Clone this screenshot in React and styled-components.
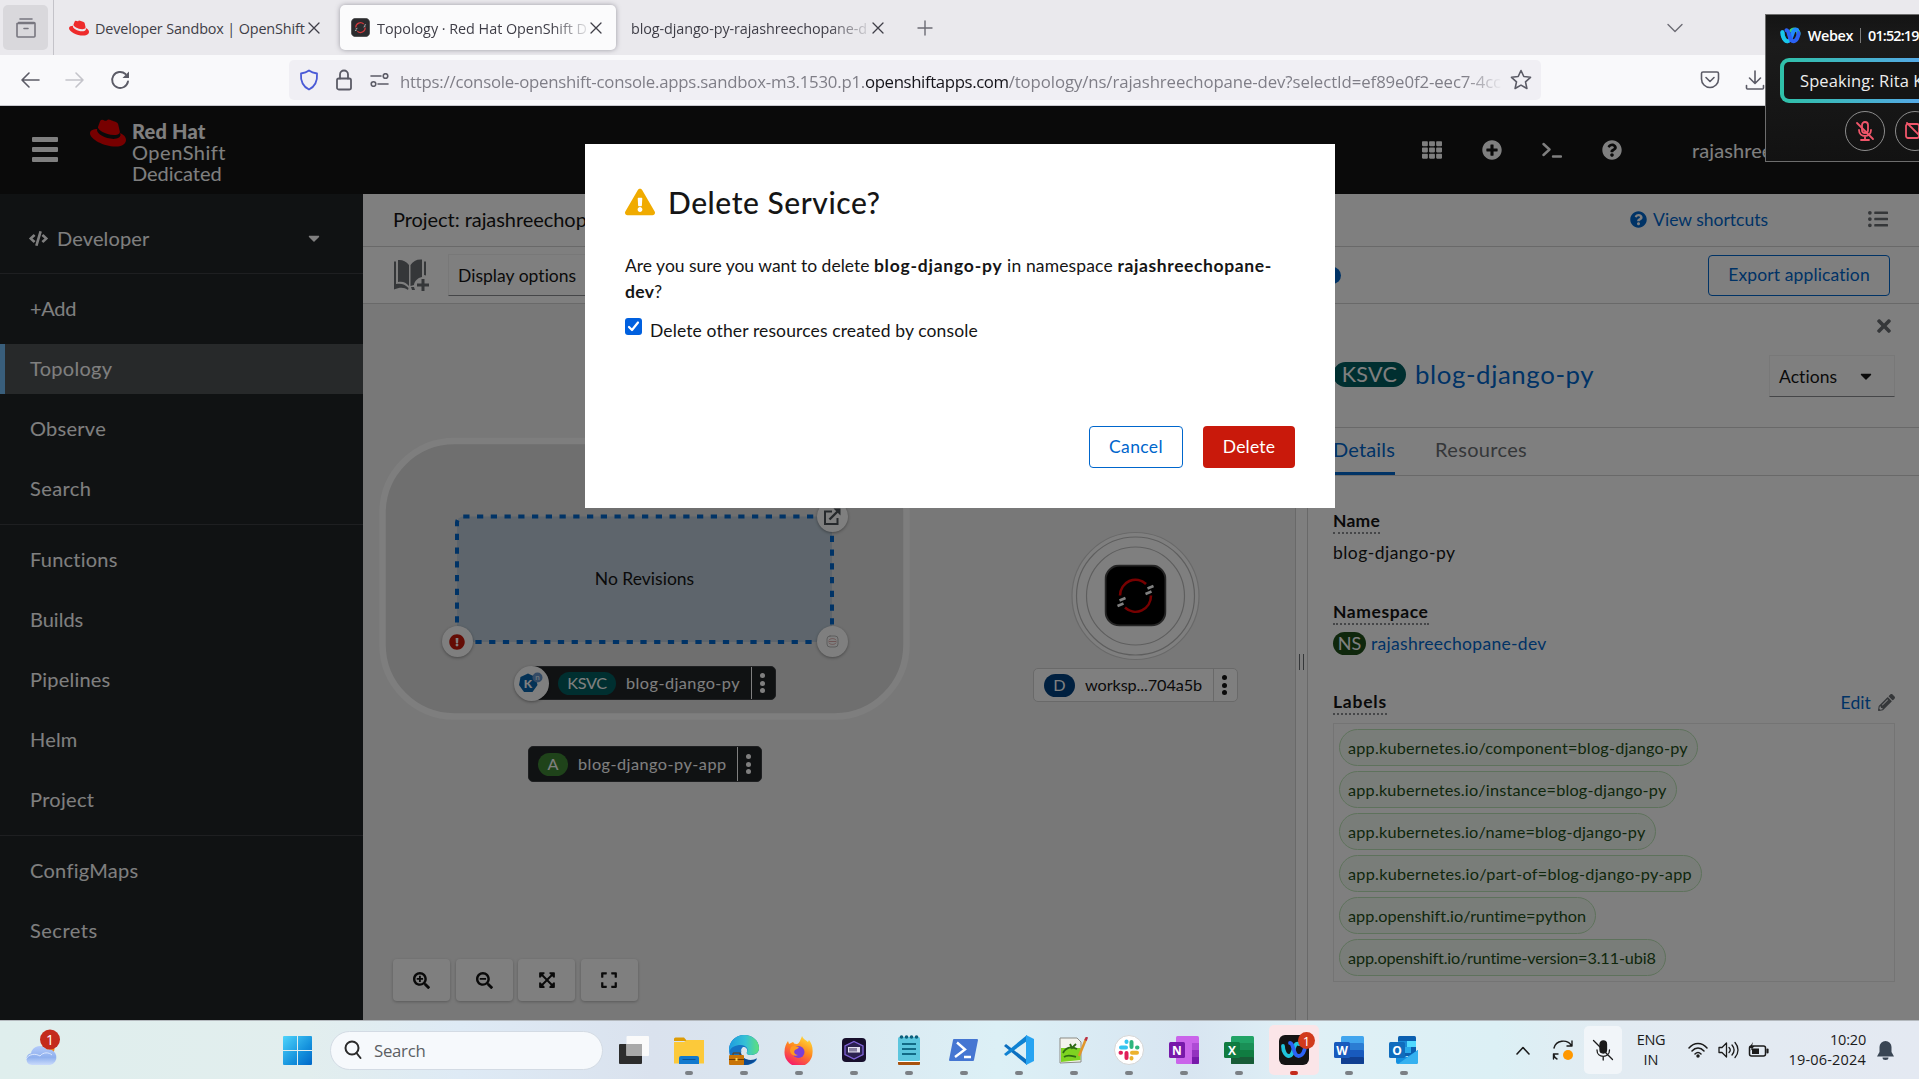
import React from "react";
import styled, { createGlobalStyle } from "styled-components";
import {
  FaTh, FaPlusCircle, FaQuestionCircle, FaCode, FaCaretDown, FaListUl, FaTimes,
  FaPencilAlt, FaExclamationTriangle, FaExclamationCircle, FaSearchPlus,
  FaSearchMinus, FaExpandArrowsAlt, FaExpand,
} from "react-icons/fa";
import { SiRedhat } from "react-icons/si";

const consoleFont = `Lato, "Open Sans", sans-serif`;
const systemFont = `"Open Sans", "Noto Sans", sans-serif`;

const GlobalStyle = createGlobalStyle`
  *, *::before, *::after { box-sizing: border-box; }
  body { margin: 0; overflow: hidden; }
  button { font: inherit; }
  svg { display: block; flex: none; }
`;

const Desktop = styled.div`
  position: relative;
  display: flex;
  flex-direction: column;
  width: 1919px;
  height: 1079px;
  overflow: hidden;
  font-family: ${systemFont};
`;

const Text = styled.span`
  white-space: pre;
  letter-spacing: ${(p) => p.$ls || 0}px;
  font-size: ${(p) => (p.$size ? `${p.$size}px` : "inherit")};
  font-weight: ${(p) => p.$weight || "inherit"};
  color: ${(p) => p.$color || "inherit"};
`;

/* ---------- Browser chrome ---------- */

const TabStrip = styled.div`
  display: flex;
  align-items: center;
  height: 55px;
  flex: none;
  background: #eae9ed;
  color: #5b5a66;
`;

const RecentBox = styled.div`
  display: flex;
  align-items: center;
  justify-content: center;
  width: 45px;
  height: 45px;
  margin-left: 3px;
  border-radius: 5px;
  background: #d9d8dc;
  color: #77767f;
`;

const StripDivider = styled.div`
  width: 1px;
  height: 55px;
  margin-left: 5px;
  background: #c4c3c9;
`;

const Tab = styled.div`
  display: flex;
  align-items: center;
  width: ${(p) => p.$width}px;
  height: 45px;
  margin-left: ${(p) => p.$gap || 0}px;
  padding: 0 ${(p) => p.$right || 12}px 0 ${(p) => p.$pad}px;
  border-radius: 5px;
  background: ${(p) => (p.$active ? "#fbfbfc" : "transparent")};
  box-shadow: ${(p) => (p.$active ? "0 0 5px rgba(90, 88, 100, 0.55)" : "none")};
  color: #3f3e47;
`;

const TabTitle = styled.div`
  flex: 1;
  margin: 2px 0 0 ${(p) => p.$gap || 0}px;
  overflow: hidden;
  font-size: 14.4px;
  mask-image: ${(p) => (p.$fade ? "linear-gradient(90deg, #000 82%, transparent 101%)" : "none")};
`;

const NewTab = styled.div`
  margin-left: 21px;
  color: #6c6b74;
`;

const TabsMenu = styled.div`
  margin-left: 734px;
  color: #6c6b74;
`;

const NavBar = styled.div`
  display: flex;
  align-items: center;
  height: 51px;
  flex: none;
  padding-left: 20px;
  border-bottom: 1px solid #c9c9cf;
  background: #f9f9fb;
  color: #5b5b66;
`;

const NavIcon = styled.div`
  margin-left: ${(p) => p.$gap || 0}px;
  color: ${(p) => p.$color || "inherit"};
`;

const AddressBar = styled.div`
  display: flex;
  align-items: center;
  width: 1252px;
  height: 40px;
  margin-left: 159px;
  padding-left: 10px;
  border-radius: 5px;
  background: #f0eff4;
`;

const Url = styled.div`
  width: 1103px;
  margin: 2px 0 0 11px;
  overflow: hidden;
  white-space: nowrap;
  font-size: 16.8px;
  color: #7f7e87;
  mask-image: linear-gradient(90deg, #000 96.5%, transparent 100%);
`;

/* ---------- Webex floating bar ---------- */

const WebexBar = styled.div`
  position: absolute;
  left: 1765px;
  top: 14px;
  width: 420px;
  height: 148px;
  padding: 10px 0 0 14px;
  border: 1px solid #6d6d6d;
  background: linear-gradient(#141414, #1b1b1b 20%, #121212);
  color: #fff;
`;

const WebexTitle = styled.div`
  display: flex;
  align-items: center;
  height: 21px;
  font-size: 14.4px;
  font-weight: 600;
`;

const WebexSeparator = styled.i`
  width: 1px;
  height: 15px;
  margin: 0 7px;
  background: #7b7b7b;
`;

const Speaking = styled.div`
  display: flex;
  align-items: center;
  width: 400px;
  height: 45px;
  margin-top: 12px;
  padding-left: 16px;
  border: 4px solid transparent;
  border-radius: 9px;
  background:
    linear-gradient(#151515, #151515) padding-box,
    linear-gradient(90deg, #2fc0a8, #55a9e6 35%, #4a7de0) border-box;
  color: #ededed;
`;

const WebexControls = styled.div`
  display: flex;
  gap: 10px;
  margin: 8px 0 0 65px;
`;

const RoundControl = styled.div`
  display: flex;
  align-items: center;
  justify-content: center;
  width: 40px;
  height: 40px;
  border: 1px solid #8c8c8c;
  border-radius: 50%;
  color: #f0566a;
`;

/* ---------- OpenShift console ---------- */

const Console = styled.div`
  position: relative;
  display: flex;
  flex-direction: column;
  height: 914px;
  flex: none;
  font-family: ${consoleFont};
  font-size: 17.5px;
  color: #151515;
`;

const Masthead = styled.header`
  display: flex;
  align-items: center;
  height: 88px;
  flex: none;
  padding: 0 0 1px 32px;
  background: #151515;
  color: #fff;
`;

const Burger = styled.div`
  display: flex;
  flex-direction: column;
  gap: 5px;
  width: 26px;

  i {
    height: 5px;
    border-radius: 1px;
    background: #fff;
  }
`;

const Brand = styled.div`
  display: flex;
  width: 1364px;
  height: 87px;
  padding: 9px 0 0 32px;
`;

const BrandWords = styled.div`
  display: flex;
  flex-direction: column;
  margin: 6px 0 0 6px;
  font-size: 20px;
  line-height: 21px;
`;

const MastheadTools = styled.div`
  display: flex;
  align-items: center;
  gap: 40px;
  width: 270px;
`;

const ConsoleBody = styled.div`
  display: flex;
  flex: 1;
  min-height: 0;
`;

const Sidebar = styled.nav`
  width: 363px;
  flex: none;
  background: #212427;
  color: #fff;
  font-size: 20px;
`;

const Perspective = styled.div`
  display: flex;
  align-items: center;
  height: 80px;
  padding: 9px 40px 0 29px;
  border-bottom: 1px solid #3c3f42;
`;

const PerspectiveName = styled.div`
  flex: 1;
  margin-left: 9px;
`;

const NavSection = styled.div`
  display: flex;
  flex-direction: column;
  gap: 10px;
  padding: 10px 0;
  border-bottom: ${(p) => (p.$last ? 0 : 1)}px solid #3c3f42;
`;

const NavItem = styled.div`
  display: flex;
  align-items: center;
  height: 50px;
  padding: 0 0 2px ${(p) => (p.$active ? 25 : 30)}px;
  border-left: ${(p) => (p.$active ? 5 : 0)}px solid #73bcf7;
  background: ${(p) => (p.$active ? "#4f5255" : "transparent")};
`;

const Main = styled.main`
  display: flex;
  flex-direction: column;
  flex: 1;
  min-width: 0;
  background: #fff;
`;

const ProjectBar = styled.div`
  display: flex;
  align-items: center;
  justify-content: space-between;
  height: 53px;
  flex: none;
  padding: 0 31px 2px 30px;
  border-bottom: 1px solid #d2d2d2;
`;

const ProjectTools = styled.div`
  display: flex;
  align-items: center;
  gap: 100px;
`;

const ShortcutLink = styled.a`
  display: flex;
  align-items: center;
  gap: 6px;
  color: #06c;
`;

const Toolbar = styled.div`
  display: flex;
  align-items: center;
  height: 57px;
  flex: none;
  padding: 0 29px 0 30px;
  border-bottom: 1px solid #d2d2d2;
`;

const SelectBox = styled.div`
  display: flex;
  align-items: center;
  justify-content: space-between;
  width: ${(p) => p.$width}px;
  height: 42px;
  margin-left: ${(p) => p.$gap || 0}px;
  padding: 0 ${(p) => p.$right || 10}px 0 9px;
  border: 1px solid #f0f0f0;
  border-bottom-color: #8a8d90;
`;

const InfoDot = styled.div`
  width: 19px;
  height: 17px;
  margin-left: auto;
  border-radius: 9px;
  background: #06c;
`;

const OutlineButton = styled.button`
  height: ${(p) => p.$height || 42}px;
  width: ${(p) => p.$width}px;
  margin-left: ${(p) => p.$gap || 0}px;
  padding: 0 0 2px;
  border: 1px solid #06c;
  border-radius: 4px;
  background: transparent;
  color: #06c;
`;

const Split = styled.div`
  display: flex;
  flex: 1;
  min-height: 0;
`;

const Canvas = styled.section`
  position: relative;
  width: 932px;
  flex: none;
  background: #f0f0f0;
`;

const Shapes = styled.svg`
  position: absolute;
  inset: 0;
`;

const RevisionCaption = styled.div`
  position: absolute;
  left: 94px;
  top: 264px;
  width: 375px;
  text-align: center;
`;

const Decorator = styled.div`
  position: absolute;
  left: ${(p) => p.$x - p.$r}px;
  top: ${(p) => p.$y - p.$r}px;
  display: flex;
  align-items: center;
  justify-content: center;
  width: ${(p) => p.$r * 2}px;
  height: ${(p) => p.$r * 2}px;
  border-radius: 50%;
  background: #fff;
  box-shadow: 0 1px 3px rgba(3, 3, 3, 0.35);
  color: ${(p) => p.$color || "#4d5258"};
`;

const NodeLabel = styled.div`
  position: absolute;
  left: ${(p) => p.$x}px;
  top: ${(p) => p.$y}px;
  display: flex;
  align-items: center;
  width: ${(p) => p.$width}px;
  height: ${(p) => p.$height}px;
  padding-left: ${(p) => p.$pad}px;
  border: 1px solid ${(p) => (p.$dark ? "#3c3f42" : "#d2d2d2")};
  border-radius: 5px;
  background: ${(p) => (p.$dark ? "#212427" : "#fff")};
  color: ${(p) => (p.$dark ? "#fff" : "#151515")};
  font-size: 16.25px;
`;

const LabelName = styled.div`
  flex: 1;
  margin-left: 10px;
  padding-bottom: 2px;
`;

const Kebab = styled.div`
  display: flex;
  flex-direction: column;
  align-items: center;
  justify-content: center;
  gap: 2.4px;
  width: 24px;
  height: 100%;
  padding-right: 2px;
  border-left: 1px solid ${(p) => (p.$dark ? "#fff" : "#d2d2d2")};

  i {
    width: 5px;
    height: 5px;
    border-radius: 50%;
    background: ${(p) => (p.$dark ? "#fff" : "#151515")};
  }
`;

const Badge = styled.span`
  display: inline-flex;
  align-items: center;
  justify-content: center;
  width: ${(p) => p.$width}px;
  height: ${(p) => p.$height || 23}px;
  flex: none;
  padding-bottom: 1px;
  border-radius: 25px;
  background: ${(p) => p.$bg};
  color: #fff;
  font-size: ${(p) => p.$size || 16.25}px;
`;

const ZoomBar = styled.div`
  position: absolute;
  left: 30px;
  top: 655px;
  display: flex;
  gap: 5.5px;
`;

const ZoomButton = styled.button`
  display: flex;
  align-items: center;
  justify-content: center;
  width: 57px;
  height: 42px;
  padding: 0;
  border: 0;
  border-radius: 4px;
  background: #fff;
  box-shadow: 0 1px 3px rgba(3, 3, 3, 0.25);
  color: #151515;
`;

const Splitter = styled.div`
  display: flex;
  align-items: center;
  justify-content: center;
  gap: 3px;
  width: 13px;
  flex: none;
  border: solid #d2d2d2;
  border-width: 0 1px;

  i {
    width: 1px;
    height: 16px;
    background: #6a6e73;
  }
`;

const SidePanel = styled.aside`
  flex: 1;
  min-width: 0;
`;

const PanelClose = styled.div`
  display: flex;
  justify-content: flex-end;
  padding: 12px 25px 0 0;
  height: 44px;
  color: #6a6e73;
`;

const PanelHeader = styled.div`
  display: flex;
  align-items: center;
  height: 80px;
  padding: 0 24px 23px 25px;
  border-bottom: 1px solid #d2d2d2;
`;

const HeaderBadge = styled.div`
  padding-bottom: 3px;
`;

const PanelTitle = styled.div`
  flex: 1;
  margin-left: 9px;
  padding-bottom: 4px;
  font-size: 25.8px;
  color: #06c;
`;

const Tabs = styled.div`
  display: flex;
  gap: 40px;
  height: 48px;
  padding-left: 25px;
  border-bottom: 1px solid #d2d2d2;
  font-size: 20px;
`;

const PanelTab = styled.div`
  height: 47px;
  padding-top: 9px;
  border-bottom: ${(p) => (p.$active ? "3px solid #06c" : "0")};
  color: ${(p) => (p.$active ? "#06c" : "#6a6e73")};
`;

const Details = styled.div`
  display: flex;
  flex-direction: column;
  align-items: flex-start;
  padding: 34px 24px 0 25px;
`;

const Term = styled.div`
  height: 24px;
  line-height: 22px;
  margin-top: ${(p) => p.$gap || 0}px;
  border-bottom: 2px dotted #8a8d90;
  font-weight: 700;
`;

const Value = styled.div`
  display: flex;
  align-items: center;
  gap: 5px;
  height: 24px;
  margin-top: ${(p) => p.$gap || 6}px;
  color: ${(p) => p.$color || "inherit"};
`;

const LabelsHead = styled.div`
  display: flex;
  align-self: stretch;
  justify-content: space-between;
  margin-top: 36px;
`;

const EditLink = styled.a`
  display: flex;
  align-items: center;
  gap: 7px;
  height: 22px;
  color: #06c;
`;

const LabelList = styled.div`
  display: flex;
  flex-direction: column;
  align-items: flex-start;
  align-self: stretch;
  gap: 5px;
  height: 259px;
  margin-top: 8px;
  padding: 5px;
  border: 1px solid #e8e8e8;
`;

const Chip = styled.span`
  display: flex;
  align-items: center;
  height: 37px;
  padding: 0 9px 0 8px;
  border: 1px solid #bde5b8;
  border-radius: 19px;
  background: #f3faf2;
  color: #1e4f18;
  font-size: 16.25px;
`;

const Backdrop = styled.div`
  position: absolute;
  inset: 0;
  display: flex;
  justify-content: center;
  align-items: flex-start;
  padding: 38px 0 0 1px;
  background: rgba(0, 0, 0, 0.5);
`;

const Modal = styled.div`
  display: flex;
  flex-direction: column;
  width: 750px;
  height: 364px;
  padding: 38px 40px 40px;
  background: #fff;
  color: #151515;
`;

const ModalTitle = styled.h1`
  display: flex;
  align-items: center;
  gap: 13px;
  height: 40px;
  margin: 0;
  font-size: 30px;
  font-weight: 500;
`;

const ModalText = styled.p`
  margin: 31px 0 0;
  line-height: 26px;
`;

const CheckRow = styled.label`
  display: flex;
  gap: 8px;
  margin-top: 13px;
  line-height: 26px;
`;

const CheckMark = styled.span`
  display: flex;
  align-items: center;
  justify-content: center;
  width: 17px;
  height: 17px;
  border-radius: 3px;
  background: #0060df;
`;

const ModalActions = styled.div`
  display: flex;
  justify-content: flex-end;
  gap: 20px;
  margin-top: auto;
`;

const DangerButton = styled.button`
  width: 92px;
  height: 42px;
  padding: 0 0 2px;
  border: 0;
  border-radius: 4px;
  background: #c9190b;
  color: #fff;
`;

/* ---------- Taskbar ---------- */

const Taskbar = styled.div`
  display: flex;
  align-items: center;
  height: 59px;
  flex: none;
  padding-right: 15px;
  border-top: 1px solid #b4b9be;
  background: linear-gradient(90deg, #dfeeed 0, #e2eeee 16%, #deeaf5 24%, #dae2ee 34%, #dae7f0 42%, #dcf0f6 52%, #d8e5f1 62%, #dff0f6 68%, #dcf0f5 78%, #e2ebf2 84%, #e4e9f2 100%);
`;

const Weather = styled.div`
  width: 270px;
  padding-left: 24px;
`;

const Cell = styled.div`
  position: relative;
  display: flex;
  align-items: center;
  justify-content: center;
  width: ${(p) => p.$width || 55}px;
  height: 58px;
  margin-left: ${(p) => p.$gap || 0}px;

  &::after {
    content: "";
    position: absolute;
    bottom: 4px;
    width: 8px;
    height: 4px;
    border-radius: 2px;
    background: ${(p) => (p.$dot ? p.$dot : "transparent")};
  }
`;

const AlertTile = styled.div`
  display: flex;
  align-items: center;
  width: 50px;
  height: 50px;
  padding-left: 10px;
  border-radius: 5px;
  background: #fbe5e8;
`;

const SearchPill = styled.div`
  display: flex;
  align-items: center;
  gap: 12px;
  width: 273px;
  height: 39px;
  margin: 0 3px 0 5px;
  padding-left: 12px;
  border: 1px solid #d3dbe4;
  border-radius: 20px;
  background: #f6f9fc;
  color: #5c5f63;
  font-size: 16.8px;
`;

const MicTile = styled.div`
  display: flex;
  align-items: center;
  justify-content: center;
  width: 38px;
  height: 48px;
  margin-left: 1px;
  border-radius: 5px;
  background: #f1f5f9;
`;

const Tray = styled.div`
  display: flex;
  align-items: center;
  margin-left: auto;
  color: #1b1b1b;
`;

const Lines = styled.div`
  display: flex;
  flex-direction: column;
  align-items: ${(p) => (p.$right ? "flex-end" : "center")};
  width: ${(p) => p.$width}px;
  margin-right: ${(p) => p.$gap || 0}px;
  font-size: 14.5px;
  line-height: 20px;
`;

/* ---------- Icons ---------- */

const Stroke = ({ w = 20, h = w, box = "0 0 20 20", sw = 1.6, children, ...rest }) => (
  <svg width={w} height={h} viewBox={box} fill="none" stroke="currentColor" strokeWidth={sw} strokeLinecap="round" strokeLinejoin="round" {...rest}>
    {children}
  </svg>
);

const CloseIcon = () => <Stroke w={12} box="0 0 12 12" sw={1.3}><path d="M1 1l10 10M11 1L1 11" /></Stroke>;

const OpenShiftIcon = ({ size, tile = "#000", strong }) => (
  <svg width={size} height={size} viewBox="0 0 62 62">
    <rect x="1" y="1" width="60" height="60" rx="14" fill={tile} stroke="#4a4a4a" strokeWidth="2" />
    <g fill="none" strokeWidth={strong ? 4 : 2.6}>
      <path d="M15.500 31a15.500 16 0 0 1 26-11.500M46.500 31a15.500 16 0 0 1-26 12" stroke={strong ? "#d0393c" : "#e00"} />
      <path d="M43 24l6-2.500M41 29.500l6-2.500M15 36l6-2.500M13 41.500l6-2.500" stroke={strong ? "#b5b5b5" : "#fff"} strokeWidth={strong ? 3 : 2.6} />
    </g>
  </svg>
);

const WebexMark = ({ w = 21, h = 17 }) => (
  <svg width={w} height={h} viewBox="0 0 26 20" fill="none" strokeWidth="5" strokeLinecap="round">
    <path d="M14 4c3-3 9-1 9 4" stroke="#3bd16f" />
    <path d="M3 6c0 6 3 11 6.500 11S15 9 16 6s3-4 5-3" stroke="#1f8bff" />
    <path d="M3 6c0 6 3 11 6 11" stroke="#18c8e8" />
    <path d="M8 3.500C12 4 11 17 16.500 17 20 17 23 12 23 7" stroke="#2b62f5" />
  </svg>
);

const QuickStartIcon = () => (
  <svg width="36" height="33" viewBox="0 0 36 33" fill="#6a6e73">
    <path d="M5 1c4-.5 8 1 11 5v21c-3-4-7-5-11-4zM17.500 6C20 2 24 0 29 .5V18c-4.500 1-7.500 4-8 8l-3.500 1z" />
    <path d="M1 2.500h2V25c5-1 9 0 12.500 4l-.5 2c-4-3-8-3-14-.5zM31 2.500h2v14l-2-.5zM18 28h3l1 3h-3z" />
    <path d="M28.500 20h3v4.500H36v3h-4.500V32h-3v-4.500H24v-3h4.500z" />
  </svg>
);

const OpenUrlIcon = () => (
  <svg width="18" height="18" viewBox="0 0 18 18" fill="none" stroke="currentColor">
    <path d="M9 3.500H2V16h12.500V10" strokeWidth="2" />
    <path d="M6.500 11.500L14.500 3.500" strokeWidth="2.400" />
    <path d="M10.500.5H17.500V7.500z" fill="currentColor" stroke="none" />
  </svg>
);

const KnativeIcon = () => (
  <svg width="26" height="22" viewBox="0 0 26 22">
    <path d="M10 1.500l7.500 3.500 2 8-5 7H6L1 13l1.500-8z" fill="#0865ad" />
    <circle cx="19.500" cy="5.500" r="5" fill="#6695ca" />
    <text x="10" y="15.500" textAnchor="middle" fontFamily={consoleFont} fontWeight="900" fontSize="12" fill="#fff">K</text>
    <text x="19.500" y="8" textAnchor="middle" fontFamily={consoleFont} fontWeight="700" fontSize="8" fill="#d5e4f4">n</text>
  </svg>
);

const BuildIcon = () => (
  <Stroke w={13} h={13} box="0 0 13 13" sw={1} color="#b9b9b9">
    <rect x="1" y="1" width="11" height="11" rx="3" />
    <path d="M3 5c2-2 5-2 7 0M3 8c2 2 5 2 7 0M3 6.500h7" stroke="#dba8a8" />
  </Stroke>
);

const OfficeIcon = ({ letter, tile, shades }) => (
  <svg width="30" height="28" viewBox="0 0 30 28">
    {shades.map((c, i) => <rect key={c} x="7" y={i * 7} width="23" height={28 - i * 7} rx="1.500" fill={c} />)}
    <rect x="0" y="6" width="16" height="16" rx="1.500" fill={tile} />
    <text x="8" y="18.500" textAnchor="middle" fontFamily={systemFont} fontWeight="700" fontSize="12" fill="#fff">{letter}</text>
  </svg>
);

const OneNoteIcon = () => (
  <svg width="30" height="28" viewBox="0 0 30 28">
    <rect x="7" width="23" height="28" rx="1.500" fill="#ca64ea" />
    <path d="M23 7h7v7h-7z" fill="#ae4bd5" /><path d="M23 14h7v7h-7z" fill="#9332bf" /><path d="M23 21h7v6a1 1 0 0 1-1 1h-6z" fill="#7719aa" />
    <rect x="0" y="6" width="16" height="16" rx="1.500" fill="#7719aa" />
    <text x="8" y="18.500" textAnchor="middle" fontFamily={systemFont} fontWeight="700" fontSize="12" fill="#fff">N</text>
  </svg>
);

const OutlookIcon = () => (
  <svg width="30" height="28" viewBox="0 0 30 28">
    <rect x="9" width="18" height="20" rx="1.500" fill="#0a5fb0" />
    <path d="M9 5h9v6H9z" fill="#1a8ad8" /><path d="M18 5h9v6h-9z" fill="#50d9ff" /><path d="M14 11h8v6h-8z" fill="#28a8ea" />
    <path d="M7 14l11 7 11-7v12a2 2 0 0 1-2 2H9a2 2 0 0 1-2-2z" fill="#1590df" />
    <path d="M29 14v12a2 2 0 0 1-2 2H9z" fill="#35b1f0" />
    <rect x="0" y="6" width="16" height="16" rx="1.500" fill="#0f6cbd" />
    <text x="8" y="18.500" textAnchor="middle" fontFamily={systemFont} fontWeight="700" fontSize="12" fill="#fff">O</text>
  </svg>
);

const WeatherIcon = () => (
  <svg width="36" height="42" viewBox="0 0 36 42">
    <defs><linearGradient id="cloud" x2="0" y2="1"><stop offset="0" stopColor="#b4cbfa" /><stop offset=".6" stopColor="#8fb0ee" /><stop offset="1" stopColor="#c9dafb" /></linearGradient></defs>
    <circle cx="24" cy="20" r="6.500" fill="#f08a1c" />
    <path d="M8 36a6 6 0 0 1-1-11.800A9 9 0 0 1 23 20.500a7.500 7.500 0 0 1 3 15.500z" fill="url(#cloud)" />
    <path d="M2 30c3-5 9-6 14-3 3-4 9-4 12-1" stroke="#dbe7fd" strokeWidth="1" fill="none" />
    <circle cx="26" cy="10.500" r="10" fill="#c42b1c" />
    <text x="26" y="15.500" textAnchor="middle" fontFamily={systemFont} fontSize="14" fill="#fff">1</text>
  </svg>
);

const WindowsIcon = () => (
  <svg width="29" height="29" viewBox="0 0 29 29">
    <defs><linearGradient id="win" x1="0" y1="0" x2="29" y2="29" gradientUnits="userSpaceOnUse"><stop stopColor="#4fd4fb" /><stop offset=".6" stopColor="#1592dd" /><stop offset="1" stopColor="#0067c8" /></linearGradient></defs>
    <path d="M0 1a1 1 0 0 1 1-1h13v14H0zM15 0h13a1 1 0 0 1 1 1v13H15zM0 15h14v14H1a1 1 0 0 1-1-1zM15 15h14v13a1 1 0 0 1-1 1H15z" fill="url(#win)" />
  </svg>
);

const TaskViewIcon = () => (
  <svg width="30" height="28" viewBox="0 0 30 28">
    <rect x="0" y="8" width="23" height="20" rx="1" fill="#2c2c2c" />
    <rect x="7.500" y="0" width="22.500" height="20" rx="1" fill="#fafafa" />
    <path d="M7.500 8H23v12H7.500z" fill="#a9a9a9" />
  </svg>
);

const FolderIcon = () => (
  <svg width="30" height="27" viewBox="0 0 30 27">
    <path d="M0 2a1.500 1.500 0 0 1 1.500-1.500H10L13 4H0z" fill="#dd9c06" />
    <path d="M0 5h10l3-2h17v23.500H0z" fill="#fcc93a" />
    <path d="M5 21a2 2 0 0 1 2-2h16a2 2 0 0 1 2 2v6H5z" fill="#1279ce" />
    <path d="M8.500 22.500h13" stroke="#0a5295" />
  </svg>
);

const EdgeIcon = () => (
  <svg width="30" height="30" viewBox="0 0 30 30">
    <defs><linearGradient id="edge"><stop stopColor="#1e9ce0" /><stop offset=".55" stopColor="#35c1d5" /><stop offset="1" stopColor="#5fe07a" /></linearGradient></defs>
    <path d="M0 15C0 7 6 0 15 0s15 6 15 13c0 5-4 7-8 7-3 0-5-1-4-3 1-3-1-5-4-5-3 2-3 8 1 11 4 3 9 3 13 1-2 4-7 6-12 6C7 30 0 24 0 15z" fill="#1573c4" />
    <path d="M0 14C1 5 8 0 15 0c9 0 15 6 15 13 0 4-3 7-8 7-3 0-5-1-4-3 2-3-1-7-6-7C6 10 2 12 0 17z" fill="url(#edge)" />
    <path d="M12.500 15c-2 6 3 10 9 10 3 0 5-1 6.500-2-2 4-7 7-13 7-5-4-5-11-2.500-15z" fill="#0b4a93" />
    <rect x="0" y="20" width="15" height="10" rx="1" fill="#c87408" /><path d="M4 20v-2h7v2M0 24.500h15" stroke="#6c3b04" fill="none" /><path d="M6.500 23h2v3h-2z" fill="#ffd24a" />
  </svg>
);

const FirefoxIcon = () => (
  <svg width="29" height="29" viewBox="0 0 29 29">
    <defs><linearGradient id="fx" x1=".8" y1="0" x2=".3" y2="1"><stop stopColor="#ffe23c" /><stop offset=".45" stopColor="#ff8a1e" /><stop offset="1" stopColor="#f5156c" /></linearGradient></defs>
    <path d="M18 0c1 3 4 4 6 6l1-2c3 4 4 8 3.500 13A14 14 0 0 1 .5 16C.5 11 2 8 4 5l1 3 4-2c1 1 1 2 4 2 2 0 4-5 5-8z" fill="url(#fx)" />
    <circle cx="14.500" cy="16" r="6" fill="#7a3fd6" />
    <path d="M7 11c3-2 5 0 8 0-1 2-3 2-4 3-2 2 0 5 3 5-4 2-8-1-8-5z" fill="#ff9a1f" />
  </svg>
);

const HexAppIcon = () => (
  <svg width="24" height="24" viewBox="0 0 24 24">
    <rect width="24" height="24" rx="4" fill="#170f2c" />
    <path d="M12 3.500l9 4.500v8.500L12 21l-9-4.500V8z" fill="#2b2150" stroke="#7f63d8" strokeWidth="1.300" />
    <rect x="6" y="9" width="12" height="5.500" fill="#e6e4f2" /><path d="M8 10v3.500M10 10v3.500M12 10v3.500M14 10v3.500" stroke="#2b2150" />
  </svg>
);

const NotepadIcon = () => (
  <svg width="22" height="30" viewBox="0 0 22 30">
    <rect y="2" width="22" height="24" rx="1.500" fill="#5cc6de" /><path d="M0 26h22v1H0z" fill="#fff" /><path d="M0 27h22v2a1 1 0 0 1-1 1H1a1 1 0 0 1-1-1z" fill="#a8530f" />
    <path d="M4 9h14M4 14h14M4 19h14" stroke="#126a86" strokeWidth="2" />
    <g fill="#0d5f7c"><circle cx="3.500" cy="2" r="1.800" /><circle cx="8.500" cy="2" r="1.800" /><circle cx="13.500" cy="2" r="1.800" /><circle cx="18.500" cy="2" r="1.800" /></g>
  </svg>
);

const PowerShellIcon = () => (
  <svg width="29" height="22" viewBox="0 0 29 22">
    <path d="M5 0h23a1 1 0 0 1 1 1l-4 20a1 1 0 0 1-1 1H1a1 1 0 0 1-1-1L4 1a1 1 0 0 1 1-1z" fill="#4576d2" />
    <path d="M8 3.500l8 7-10 7.500M15 18h7" stroke="#fff" strokeWidth="2.400" fill="none" />
  </svg>
);

const CodeIcon = () => (
  <svg width="30" height="30" viewBox="0 0 30 30">
    <path d="M0 11l2-2 21 16v5z" fill="#0a6fc0" /><path d="M0 19l2 2L23 6V0z" fill="#0f82d2" />
    <path d="M22 0l8 4v22l-8 4z" fill="#27a4f2" />
  </svg>
);

const NotepadPlusIcon = () => (
  <svg width="29" height="27" viewBox="0 0 29 27">
    <path d="M1 1h17l4 4v20L1 26z" fill="#f4f4ee" stroke="#8b8b85" /><path d="M2 11h19.500v12L2 25z" fill="#7ed321" />
    <path d="M4 16c3-6 9-7 14-4M5 20c4-3 8-1 12 0M11 7l2 4 4-4" stroke="#2d6a12" strokeWidth="1.800" fill="none" />
    <path d="M27 2l-7 17" stroke="#e0962a" strokeWidth="2.500" /><path d="M28 0l-1.500 3.500" stroke="#b34" strokeWidth="2.500" />
  </svg>
);

const SlackIcon = () => (
  <svg width="30" height="30" viewBox="0 0 30 30">
    <circle cx="15" cy="15" r="14.500" fill="#fff" stroke="#d5d5d5" />
    <g strokeWidth="4" strokeLinecap="round" fill="none">
      <path d="M7 12.500h5M12.500 7v-.5" stroke="#36c5f0" /><path d="M17.500 7v5M23 12.500h.5" stroke="#2eb67d" />
      <path d="M18 17.800h5M17.500 23v.5" stroke="#ecb22e" /><path d="M12.500 18v5M7 17.800h-.5" stroke="#e01e5a" />
    </g>
  </svg>
);

const WebexAppIcon = () => (
  <svg width="38" height="36" viewBox="0 0 38 36">
    <rect x="0" y="3" width="30" height="30" rx="6" fill="#141414" />
    <g fill="none" strokeWidth="3.800" strokeLinecap="round"><path d="M4 14c0 6 3 10 6 10s4-4 5-8 3-5 5-4" stroke="#1fc4dc" /><path d="M11 11c4 0 3 13 8.500 13 4 0 6.500-5 6.500-10" stroke="#2b62f5" /></g>
    <circle cx="27.500" cy="8.500" r="8.500" fill="#d13a1c" />
    <text x="27.500" y="13.500" textAnchor="middle" fontFamily={systemFont} fontSize="13" fill="#fff">1</text>
  </svg>
);

const dot = "#7b8085";
const taskbarApps = [
  { icon: <TaskViewIcon /> },
  { icon: <FolderIcon />, dot },
  { icon: <EdgeIcon />, dot },
  { icon: <FirefoxIcon />, dot },
  { icon: <HexAppIcon />, dot },
  { icon: <NotepadIcon />, dot },
  { icon: <PowerShellIcon />, dot },
  { icon: <CodeIcon />, dot },
  { icon: <NotepadPlusIcon />, dot },
  { icon: <SlackIcon />, dot },
  { icon: <OneNoteIcon />, dot },
  { icon: <OfficeIcon letter="X" tile="#107c41" shades={["#21a366", "#1a8f56", "#107c41", "#185c37"]} />, dot },
  { icon: <AlertTile><WebexAppIcon /></AlertTile>, dot: "#c42b1c" },
  { icon: <OfficeIcon letter="W" tile="#185abd" shades={["#41a5ee", "#2b7cd3", "#185abd", "#103f91"]} />, dot },
  { icon: <OutlookIcon />, dot },
];

const navSections = [
  [["+Add", -0.33], ["Topology", 0.3], ["Observe", 0.27], ["Search", 0.4]],
  [["Functions", 0.23], ["Builds", 0], ["Pipelines", 0.23], ["Helm", 0.2], ["Project", 0.32]],
  [["ConfigMaps", 0.3], ["Secrets", 0.5]],
];

const labels = [
  ["app.kubernetes.io/component=blog-django-py", 0.2],
  ["app.kubernetes.io/instance=blog-django-py", 0.195],
  ["app.kubernetes.io/name=blog-django-py", 0.204],
  ["app.kubernetes.io/part-of=blog-django-py-app", 0.25],
  ["app.openshift.io/runtime=python", 0.04],
  ["app.openshift.io/runtime-version=3.11-ubi8", -0.15],
];

const KebabMenu = ({ dark }) => <Kebab $dark={dark}><i /><i /><i /></Kebab>;

function BrowserChrome() {
  return (
    <>
      <TabStrip>
        <RecentBox>
          <Stroke w={20} h={20}><path d="M4 1h12M2.500 4.500h15v1H1v12.500a1 1 0 0 0 1 1h16a1 1 0 0 0 1-1V5.500a1 1 0 0 0-1-1zM8 10.500h4" /></Stroke>
        </RecentBox>
        <StripDivider />
        <Tab $width={278} $pad={15}>
          <SiRedhat size={20} color="#ee2b2b" />
          <TabTitle $gap={6}><Text $ls={-0.14}>Developer Sandbox | OpenShift</Text></TabTitle>
          <CloseIcon />
        </Tab>
        <Tab $width={276} $pad={11} $gap={8} $right={14} $active>
          <OpenShiftIcon size={19} tile="#2b2b2e" strong />
          <TabTitle $gap={7} $fade><Text $ls={-0.035}>Topology · Red Hat OpenShift D</Text></TabTitle>
          <CloseIcon />
        </Tab>
        <Tab $width={280} $pad={15}>
          <TabTitle $fade><Text $ls={-0.1}>blog-django-py-rajashreechopane-d</Text></TabTitle>
          <CloseIcon />
        </Tab>
        <NewTab><Stroke w={16} box="0 0 16 16" sw={1.4}><path d="M8 1v14M1 8h14" /></Stroke></NewTab>
        <TabsMenu><Stroke w={16} h={10} box="0 0 16 10" sw={1.4}><path d="M1 1.500l7 7 7-7" /></Stroke></TabsMenu>
      </TabStrip>
      <NavBar>
        <NavIcon><Stroke><path d="M19 10H2M9 3L2 10l7 7" /></Stroke></NavIcon>
        <NavIcon $gap={25} $color="#c4c4ca"><Stroke><path d="M1 10h17M11 3l7 7-7 7" /></Stroke></NavIcon>
        <NavIcon $gap={25}><Stroke sw={1.9}><path d="M18 11.500a8 8 0 1 1-2.500-7.500" /><path d="M19 1.500v6.500h-6.500z" fill="currentColor" stroke="none" /></Stroke></NavIcon>
        <AddressBar>
          <Stroke w={20} h={22} box="0 0 20 22" color="#4a5ad6" sw={1.8}><path d="M10 1.500c2.500 1.800 5 2.500 8 3C18.500 11 17 17 10 20.500 3 17 1.500 11 2 4.500c3-.5 5.500-1.200 8-3z" /></Stroke>
          <NavIcon $gap={16}><Stroke w={18} h={22} box="0 0 18 22" sw={1.8}><rect x="2" y="9.500" width="14" height="11" rx="1.800" /><path d="M5 9.500V5.500a4 4 0 0 1 8 0v4" /></Stroke></NavIcon>
          <NavIcon $gap={17}><Stroke w={19} h={14} box="0 0 19 14"><path d="M1 3h10M8 11h10" /><circle cx="15.500" cy="3" r="2.300" /><circle cx="3.500" cy="11" r="2.300" /></Stroke></NavIcon>
          <Url>
            <Text $ls={-0.23}>https://console-openshift-console.apps.sandbox-m3.1530.p1.</Text>
            <Text $ls={-0.38} $color="#15141a">openshiftapps.com</Text>
            <Text $ls={-0.1}>/topology/ns/rajashreechopane-dev?selectId=ef89e0f2-eec7-4cc</Text>
          </Url>
          <NavIcon $gap={7}><Stroke w={22} box="0 0 22 22"><path d="M11 1.500l2.800 6 6.700.8-5 4.500 1.400 6.700-5.900-3.400-5.900 3.400 1.400-6.700-5-4.500 6.700-.8z" /></Stroke></NavIcon>
        </AddressBar>
        <NavIcon $gap={159}><Stroke><path d="M3 2h14a1.500 1.500 0 0 1 1.500 1.500V9a8.500 8.500 0 0 1-17 0V3.500A1.500 1.500 0 0 1 3 2zM6 7.500l4 4 4-4" /></Stroke></NavIcon>
        <NavIcon $gap={25}><Stroke><path d="M10 1v12M4.500 8l5.500 5.500L15.500 8M1.500 15.500V18a1 1 0 0 0 1 1h15a1 1 0 0 0 1-1v-2.500" /></Stroke></NavIcon>
      </NavBar>
    </>
  );
}

function ConsoleSidebar() {
  return (
    <Sidebar>
      <Perspective>
        <FaCode size={19} />
        <PerspectiveName><Text $ls={0.15}>Developer</Text></PerspectiveName>
        <FaCaretDown size={18} />
      </Perspective>
      {navSections.map((section, i) => (
        <NavSection key={i} $last={i === navSections.length - 1}>
          {section.map(([name, ls]) => (
            <NavItem key={name} $active={name === "Topology"}><Text $ls={ls}>{name}</Text></NavItem>
          ))}
        </NavSection>
      ))}
    </Sidebar>
  );
}

function TopologyCanvas() {
  return (
    <Canvas>
      <Shapes width="932" height="717">
        <rect x="19.500" y="137" width="524" height="275.500" rx="72" fill="#dedede" stroke="#fcfcfc" strokeWidth="6.500" />
        <rect x="94" y="212.500" width="375" height="125.500" rx="6.250" fill="#bccbd8" stroke="#06c" strokeWidth="4" strokeDasharray="6.250 7.500" />
        <g fill="#fff" stroke="#d2d2d2" strokeWidth="1.200">
          <circle cx="772.500" cy="292" r="63.500" />
          <circle cx="772.500" cy="292" r="59" stroke="#bdbdbd" />
          <circle cx="772.500" cy="292" r="49" stroke="#bdbdbd" />
        </g>
        <svg x="741.500" y="260.500" width="62" height="63"><OpenShiftIcon size={62} /></svg>
      </Shapes>
      <RevisionCaption><Text $ls={0.02}>No Revisions</Text></RevisionCaption>
      <Decorator $x={469} $y={212.5} $r={15.5}><OpenUrlIcon /></Decorator>
      <Decorator $x={94} $y={337.5} $r={15.5} $color="#c9190b"><FaExclamationCircle size={16} /></Decorator>
      <Decorator $x={469} $y={337.5} $r={15.5}><BuildIcon /></Decorator>
      <NodeLabel $x={166} $y={362} $width={247} $height={34} $pad={28} $dark>
        <Badge $width={58} $bg="#005f60"><Text $ls={-0.35}>KSVC</Text></Badge>
        <LabelName><Text $ls={0.46}>blog-django-py</Text></LabelName>
        <KebabMenu dark />
      </NodeLabel>
      <Decorator $x={168} $y={379} $r={17.5}><KnativeIcon /></Decorator>
      <NodeLabel $x={165} $y={442} $width={234} $height={36} $pad={9} $dark>
        <Badge $width={30} $bg="#3e8635"><Text>A</Text></Badge>
        <LabelName><Text $ls={0.48}>blog-django-py-app</Text></LabelName>
        <KebabMenu dark />
      </NodeLabel>
      <NodeLabel $x={670} $y={364} $width={205} $height={34} $pad={10}>
        <Badge $width={31} $bg="#004080"><Text>D</Text></Badge>
        <LabelName><Text $ls={-0.1}>worksp...704a5b</Text></LabelName>
        <KebabMenu />
      </NodeLabel>
      <ZoomBar>
        <ZoomButton><FaSearchPlus size={17} /></ZoomButton>
        <ZoomButton><FaSearchMinus size={17} /></ZoomButton>
        <ZoomButton><FaExpandArrowsAlt size={18} /></ZoomButton>
        <ZoomButton><FaExpand size={18} /></ZoomButton>
      </ZoomBar>
    </Canvas>
  );
}

function DetailsPanel() {
  return (
    <SidePanel>
      <PanelClose><FaTimes size={20} /></PanelClose>
      <PanelHeader>
        <HeaderBadge><Badge $width={73} $height={25} $bg="#005f60" $size={21.5}><Text $ls={0.4}>KSVC</Text></Badge></HeaderBadge>
        <PanelTitle><Text $ls={0.6}>blog-django-py</Text></PanelTitle>
        <SelectBox $width={126} $right={19}><Text $ls={0.07}>Actions</Text><FaCaretDown size={18} /></SelectBox>
      </PanelHeader>
      <Tabs>
        <PanelTab $active><Text $ls={0.17}>Details</Text></PanelTab>
        <PanelTab><Text $ls={0.33}>Resources</Text></PanelTab>
      </Tabs>
      <Details>
        <Term><Text $ls={0.2}>Name</Text></Term>
        <Value><Text $ls={0.47}>blog-django-py</Text></Value>
        <Term $gap={37}><Text $ls={0.58}>Namespace</Text></Term>
        <Value $color="#06c">
          <Badge $width={33} $bg="#1e4f18" $size={18}><Text>NS</Text></Badge>
          <Text $ls={0.3}>rajashreechopane-dev</Text>
        </Value>
        <LabelsHead>
          <Term><Text $ls={0.78}>Labels</Text></Term>
          <EditLink><Text $ls={0.1}>Edit</Text><FaPencilAlt size={17} color="#6a6e73" /></EditLink>
        </LabelsHead>
        <LabelList>
          {labels.map(([name, ls]) => <Chip key={name}><Text $ls={ls}>{name}</Text></Chip>)}
        </LabelList>
      </Details>
    </SidePanel>
  );
}

function DeleteDialog() {
  return (
    <Backdrop>
      <Modal>
        <ModalTitle><FaExclamationTriangle size={30} color="#f0ab00" /><Text $ls={0.55}>Delete Service?</Text></ModalTitle>
        <ModalText>
          <Text>Are you sure you want to delete </Text>
          <Text $weight={700} $ls={0.77}>blog-django-py</Text>
          <Text $ls={0.14}> in namespace </Text>
          <Text $weight={700} $ls={0.61}>rajashreechopane-</Text>
          <br />
          <Text $weight={700} $ls={0.3}>dev</Text>?
        </ModalText>
        <CheckRow>
          <CheckMark><Stroke w={13} box="0 0 13 13" sw={2.2} color="#fff"><path d="M2 7l3 3 6-7.500" /></Stroke></CheckMark>
          <Text $ls={0.13}>Delete other resources created by console</Text>
        </CheckRow>
        <ModalActions>
          <OutlineButton $width={94}><Text $ls={0.38}>Cancel</Text></OutlineButton>
          <DangerButton><Text $ls={0.21}>Delete</Text></DangerButton>
        </ModalActions>
      </Modal>
    </Backdrop>
  );
}

function OpenShiftConsole() {
  return (
    <Console>
      <Masthead>
        <Burger><i /><i /><i /></Burger>
        <Brand>
          <SiRedhat size={36} color="#e00" />
          <BrandWords>
            <Text $weight={900} $ls={0.2}>Red Hat</Text>
            <Text $ls={0.52}>OpenShift</Text>
            <Text $ls={-0.02}>Dedicated</Text>
          </BrandWords>
        </Brand>
        <MastheadTools>
          <FaTh size={20} />
          <FaPlusCircle size={20} />
          <Stroke w={20} h={16} box="0 0 20 16" sw={2.4}><path d="M1.500 2l6 5.500-6 5.500M11 14.500h8" /></Stroke>
          <FaQuestionCircle size={20} />
        </MastheadTools>
        <Text $size={20} $ls={0.1}>rajashreechopane</Text>
      </Masthead>
      <ConsoleBody>
        <ConsoleSidebar />
        <Main>
          <ProjectBar>
            <Text $size={20} $ls={-0.06}>Project: rajashreechopane-dev</Text>
            <ProjectTools>
              <ShortcutLink><FaQuestionCircle size={17} /><Text>View shortcuts</Text></ShortcutLink>
              <FaListUl size={20} color="#6a6e73" />
            </ProjectTools>
          </ProjectBar>
          <Toolbar>
            <QuickStartIcon />
            <SelectBox $width={165} $gap={19}><Text $ls={0.03}>Display options</Text><FaCaretDown size={16} /></SelectBox>
            <InfoDot />
            <OutlineButton $width={182} $height={41} $gap={367}><Text $ls={0.12}>Export application</Text></OutlineButton>
          </Toolbar>
          <Split>
            <TopologyCanvas />
            <Splitter><i /><i /></Splitter>
            <DetailsPanel />
          </Split>
        </Main>
      </ConsoleBody>
      <DeleteDialog />
    </Console>
  );
}

function WebexWindow() {
  return (
    <WebexBar>
      <WebexTitle>
        <WebexMark /><Text $ls={-0.35}>  Webex</Text><WebexSeparator /><Text $ls={-0.85}>01:52:19</Text>
      </WebexTitle>
      <Speaking><Text $size={16.5} $ls={0.1}>Speaking: Rita K</Text></Speaking>
      <WebexControls>
        <RoundControl><Stroke w={22} box="0 0 22 22" sw={1.8}><rect x="8" y="2" width="6" height="11" rx="3" /><path d="M5 10c0 8 12 8 12 0M11 16v4M7 20h8M3 3l16 16" /></Stroke></RoundControl>
        <RoundControl><Stroke w={22} box="0 0 22 22" sw={1.8}><rect x="2" y="4" width="13" height="14" rx="2" /><path d="M15 9l5-3v10l-5-3M3 3l16 16" /></Stroke></RoundControl>
      </WebexControls>
    </WebexBar>
  );
}

function WindowsTaskbar() {
  return (
    <Taskbar>
      <Weather><WeatherIcon /></Weather>
      <Cell><WindowsIcon /></Cell>
      <SearchPill>
        <Stroke w={19} h={20} box="0 0 19 20" sw={2} color="#2a2a2a"><circle cx="9" cy="8" r="6.500" /><path d="M13.500 13l4 5" /></Stroke>
        <Text $ls={-0.28}>Search</Text>
      </SearchPill>
      {taskbarApps.map((app, i) => <Cell key={i} $dot={app.dot}>{app.icon}</Cell>)}
      <Tray>
        <Cell $width={40}><Stroke w={14} h={9} box="0 0 14 9"><path d="M1 8l6-6.500L13 8" /></Stroke></Cell>
        <Cell $width={40}>
          <Stroke w={22} h={22} box="0 0 22 22" sw={1.4}>
            <path d="M2 9C4 1 15 0 19 6M20 2v5h-5M5 20c-2-1-3-3-3.500-5H6M1.500 20v-5" />
            <circle cx="16" cy="16" r="5" fill="#ff9800" stroke="none" />
          </Stroke>
        </Cell>
        <MicTile>
          <Stroke w={22} h={22} box="0 0 22 22" sw={1.3}>
            <rect x="8" y="2" width="6.500" height="12" rx="3.200" fill="currentColor" />
            <path d="M5 11c0 8.500 12.500 8.500 12.500 0M11.200 17.500V21M1.500 1.500l19 19" />
          </Stroke>
        </MicTile>
        <Lines $width={58} $gap={3}><Text $ls={-0.34}>ENG</Text><Text>IN</Text></Lines>
        <Cell $width={30}><Stroke w={20} h={16} box="0 0 20 16" sw={1.5}><path d="M1 6c5-6 13-6 18 0M4 9c3.500-4 8.500-4 12 0M7 12c2-2 4-2 6 0" /><circle cx="10" cy="14" r="1" fill="currentColor" /></Stroke></Cell>
        <Cell $width={30}><Stroke w={21} h={18} box="0 0 21 18" sw={1.3}><path d="M1 6.500h3l4.500-4.500v14L4 11.500H1zM11 6.500c1.500 1.500 1.500 3.500 0 5M14 4c2.500 3 2.500 7 0 10M17 1.500c4 4.500 4 10.500 0 15" /></Stroke></Cell>
        <Cell $width={30}><Stroke w={21} h={16} box="0 0 21 16" sw={1.5}><rect x="1.500" y="4" width="16" height="10" rx="2" /><path d="M4 6.500h7v5.500H4z" fill="currentColor" stroke="none" /><path d="M19.500 7.500v3" strokeWidth="2.200" /><path d="M5 0L1 6h2.500L2.500 9 6.500 4H4z" fill="currentColor" stroke="none" /></Stroke></Cell>
        <Lines $width={93} $right><Text $ls={-0.2}>10:20</Text><Text $ls={0.18}>19-06-2024</Text></Lines>
        <Cell $width={38}><svg width="17" height="19" viewBox="0 0 17 19" fill="#3a4654"><path d="M8.500 0A6 6 0 0 1 14.500 6v5l2.500 4.500H0L2.500 11V6a6 6 0 0 1 6-6zM5.500 16.500h6a3 2.500 0 0 1-6 0z" /></svg></Cell>
      </Tray>
    </Taskbar>
  );
}

export default function App() {
  return (
    <Desktop>
      <GlobalStyle />
      <BrowserChrome />
      <OpenShiftConsole />
      <WindowsTaskbar />
      <WebexWindow />
    </Desktop>
  );
}
